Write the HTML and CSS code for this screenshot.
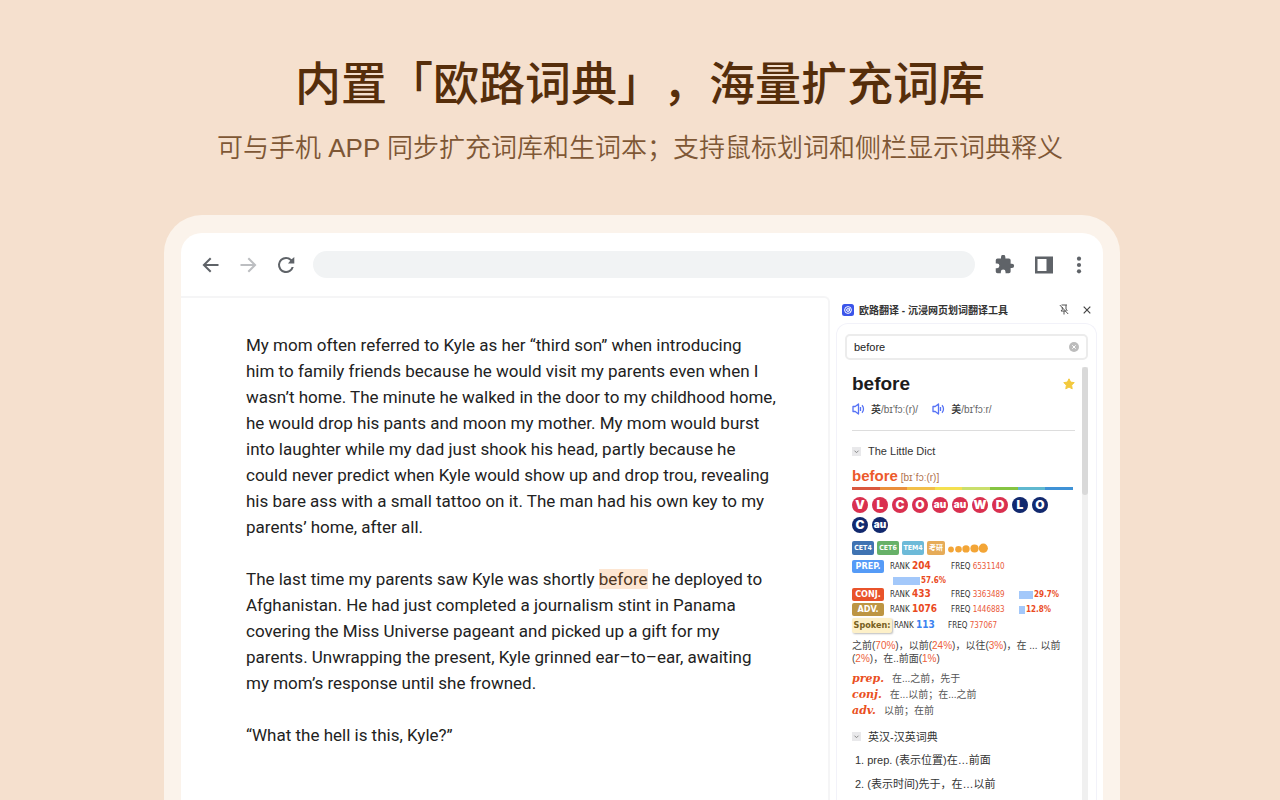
FILE: index.html
```html
<!DOCTYPE html>
<html lang="zh-CN">
<head>
  <meta charset="UTF-8">
  <title>欧路翻译</title>
  <link rel="stylesheet" href="styles.css">
</head>
<body>

  <header class="hero">
    <h1>内置「欧路词典」，海量扩充词库</h1>
    <p>可与手机 APP 同步扩充词库和生词本；支持鼠标划词和侧栏显示词典释义</p>
  </header>

  <div class="stage">
    <div class="browser">

      <div class="toolbar">
        <div class="nav-buttons">
          <button class="icon-btn" aria-label="Back">
            <svg width="24" height="24" viewBox="0 0 24 24"><path d="M20.500 12H6M12.700 5.200L5.900 12l6.800 6.800" fill="none" stroke="#5f6368" stroke-width="2"/></svg>
          </button>
          <button class="icon-btn" aria-label="Forward">
            <svg width="24" height="24" viewBox="0 0 24 24"><path d="M4.500 12H19M12.300 5.200l6.800 6.800-6.800 6.800" fill="none" stroke="#bcbec1" stroke-width="2"/></svg>
          </button>
          <button class="icon-btn" aria-label="Reload">
            <svg width="24" height="24" viewBox="0 0 24 24"><path fill="#5f6368" d="M17.65 6.35A7.96 7.96 0 0 0 12 4a8 8 0 1 0 7.730 10h-2.080A6 6 0 1 1 12 6c1.660 0 3.140.690 4.220 1.780L14 10.500h6.300V4z"/></svg>
          </button>
        </div>
        <input class="address" type="text" aria-label="Address">
        <div class="tool-buttons">
          <button class="icon-btn" aria-label="Extensions">
            <svg width="21" height="21" viewBox="0 0 24 24"><path fill="#5f6368" d="M20.500 11H19V7a2 2 0 0 0-2-2h-4V3.500a2.500 2.500 0 0 0-5 0V5H4a2 2 0 0 0-2 2v3.800h1.500a2.700 2.700 0 0 1 0 5.400H2V20a2 2 0 0 0 2 2h3.800v-1.500a2.700 2.700 0 0 1 5.400 0V22H17a2 2 0 0 0 2-2v-4h1.500a2.500 2.500 0 0 0 0-5z"/></svg>
          </button>
          <button class="icon-btn" aria-label="Side panel">
            <svg width="18" height="18" viewBox="0 0 18 18"><path fill="#5f6368" fill-rule="evenodd" d="M0 0.500h18v17H0zM2.500 3v12h9V3z"/></svg>
          </button>
          <button class="icon-btn menu-btn" aria-label="Menu">
            <svg width="6" height="18" viewBox="0 0 6 18"><g fill="#5f6368"><circle cx="3" cy="2.700" r="2.100"/><circle cx="3" cy="9" r="2.100"/><circle cx="3" cy="15.300" r="2.100"/></g></svg>
          </button>
        </div>
      </div>

      <div class="content">
        <main class="article">
          <p>My mom often referred to Kyle as her “third son” when introducing<br>
          him to family friends because he would visit my parents even when I<br>
          wasn’t home. The minute he walked in the door to my childhood home,<br>
          he would drop his pants and moon my mother. My mom would burst<br>
          into laughter while my dad just shook his head, partly because he<br>
          could never predict when Kyle would show up and drop trou, revealing<br>
          his bare ass with a small tattoo on it. The man had his own key to my<br>
          parents’ home, after all.</p>
          <p>The last time my parents saw Kyle was shortly <mark>before</mark> he deployed to<br>
          Afghanistan. He had just completed a journalism stint in Panama<br>
          covering the Miss Universe pageant and picked up a gift for my<br>
          parents. Unwrapping the present, Kyle grinned ear–to–ear, awaiting<br>
          my mom’s response until she frowned.</p>
          <p>“What the hell is this, Kyle?”</p>
        </main>

        <aside class="panel">
          <div class="panel-head">
            <svg class="logo" width="12" height="12" viewBox="0 0 12 12"><rect width="12" height="12" rx="2.500" fill="#3b55ea"/><circle cx="6" cy="6" r="3.400" fill="none" stroke="#fff" stroke-width="1"/><circle cx="6" cy="6" r="1.400" fill="none" stroke="#fff" stroke-width="1"/><path d="M7.500 4v3l1.500 1" fill="none" stroke="#fff" stroke-width=".7"/></svg>
            <span class="panel-title">欧路翻译 - 沉浸网页划词翻译工具</span>
            <button class="icon-btn" aria-label="Unpin">
              <svg width="10" height="11" viewBox="0 0 10 11"><path d="M2.500 1h5.500M3.300 3v2.500L2 7h5M7 1v4l1.300 2M5 7v3.500M.8 1l8.400 9" fill="none" stroke="#555" stroke-width="1"/></svg>
            </button>
            <button class="icon-btn" aria-label="Close">
              <svg width="8" height="8" viewBox="0 0 8 8"><path d="M.7.700l6.600 6.600M7.300.700L.7 7.300" stroke="#444" stroke-width="1.200"/></svg>
            </button>
          </div>

          <div class="card">
            <div class="search">
              <input type="text" value="before" aria-label="Search">
              <button class="icon-btn" aria-label="Clear">
                <svg width="10" height="10" viewBox="0 0 10 10"><circle cx="5" cy="5" r="5" fill="#bcbcbc"/><path d="M3.300 3.300l3.400 3.400M6.700 3.300L3.300 6.700" stroke="#fff" stroke-width="1"/></svg>
              </button>
            </div>

            <div class="scroller">
              <div class="result">
                <div class="word">
                  <h2>before</h2>
                  <button class="icon-btn" aria-label="Favourite">
                    <svg width="12" height="12" viewBox="0 0 12 12"><path fill="#f3c93d" stroke="#f3c93d" stroke-linejoin="round" d="M6 .8l1.600 3.300 3.600.5-2.600 2.600.6 3.600L6 9.100l-3.200 1.700.6-3.600L.8 4.600l3.600-.5z"/></svg>
                  </button>
                </div>
                <div class="pron">
                  <button class="icon-btn" aria-label="Play UK"><svg width="13" height="12" viewBox="0 0 13 12"><path d="M1 3.500h2.200L6.500 1v10L3.200 8.500H1zM8.500 4v4M10 2.300c2 2 2 5.400 0 7.400" fill="none" stroke="#5672f5" stroke-width="1.300" stroke-linejoin="round"/></svg></button>
                  <span><b>英</b>/bɪ'fɔː(r)/</span>
                  <button class="icon-btn" aria-label="Play US"><svg width="13" height="12" viewBox="0 0 13 12"><path d="M1 3.500h2.200L6.500 1v10L3.200 8.500H1zM8.500 4v4M10 2.300c2 2 2 5.400 0 7.400" fill="none" stroke="#5672f5" stroke-width="1.300" stroke-linejoin="round"/></svg></button>
                  <span><b>美</b>/bɪ'fɔːr/</span>
                </div>

                <h3 class="dict-name"><i class="fold"><svg width="9" height="9" viewBox="0 0 9 9"><path d="M2.500 3.700l2 2 2-2" fill="none" stroke="#888"/></svg></i>The Little Dict</h3>
                <div class="entry"><b>before</b> <span>[bɪˈfɔː(r)]</span></div>
                <div class="rainbow"></div>

                <div class="badges">
                  <span>V</span><span>L</span><span>C</span><span>O</span><span class="small">au</span><span class="small">au</span><span>W</span><span>D</span><span class="navy">L</span><span class="navy">O</span><span class="navy">C</span><span class="navy small">au</span>
                </div>

                <div class="exams">
                  <span class="cet4">CET4</span><span class="cet6">CET6</span><span class="tem4">TEM4</span><span class="ky">考研</span>
                  <svg width="40" height="10" viewBox="0 0 40 10"><g fill="#f3a536"><circle cx="3" cy="6.500" r="2.900"/><circle cx="10.500" cy="6.200" r="3.300"/><circle cx="18" cy="5.900" r="3.700"/><circle cx="26.500" cy="5.500" r="4.100"/><circle cx="35.300" cy="5.200" r="4.600"/></g></svg>
                </div>

                <div class="stats">
                  <div class="stat">
                    <span class="pos blue">PREP.</span><span>RANK <b>204</b></span><span>FREQ <em>6531140</em></span>
                  </div>
                  <div class="share wrapped"><i class="bar" style="width:27px"></i>57.6%</div>
                  <div class="stat">
                    <span class="pos red">CONJ.</span><span>RANK <b>433</b></span><span>FREQ <em>3363489</em></span>
                    <span class="share"><i class="bar" style="width:14px"></i>29.7%</span>
                  </div>
                  <div class="stat">
                    <span class="pos gold">ADV.</span><span>RANK <b>1076</b></span><span>FREQ <em>1446883</em></span>
                    <span class="share"><i class="bar" style="width:6px"></i>12.8%</span>
                  </div>
                  <div class="stat spoken">
                    <span class="pos cream">Spoken:</span><span>RANK <b>113</b></span><span>FREQ <em>737067</em></span>
                  </div>
                </div>

                <p class="senses">之前(<em>70%</em>)，以前(<em>24%</em>)，以往(<em>3%</em>)，在 ... 以前<br>(<em>2%</em>)，在..前面(<em>1%</em>)</p>

                <ul class="meanings">
                  <li><i>prep.</i>在...之前，先于</li>
                  <li><i>conj.</i>在...以前；在...之前</li>
                  <li><i>adv.</i>以前；在前</li>
                </ul>

                <h3 class="dict-name second"><i class="fold"><svg width="9" height="9" viewBox="0 0 9 9"><path d="M2.500 3.700l2 2 2-2" fill="none" stroke="#888"/></svg></i>英汉-汉英词典</h3>
                <div class="defs">
                  <p>1. prep. (表示位置)在…前面</p>
                  <p>2. (表示时间)先于，在…以前</p>
                </div>
              </div>
              <div class="track"><div class="thumb"></div></div>
            </div>
          </div>
        </aside>
      </div>

    </div>
  </div>

</body>
</html>
```
FILE: styles.css
```css
* {
  box-sizing: border-box;
}
body {
  margin: 0;
  height: 100vh;
  overflow: hidden;
  display: flex;
  flex-direction: column;
  background: #f5e0ce;
  font-family: "Liberation Sans", "Noto Sans CJK SC", sans-serif;
}
h1, h2, h3, p, ul {
  margin: 0;
  padding: 0;
}
.icon-btn {
  display: flex;
  align-items: center;
  justify-content: center;
  padding: 0;
  border: 0;
  background: none;
}

/* headline */
.hero {
  padding-top: 48px;
  text-align: center;
  white-space: nowrap;
}
.hero h1 {
  font: 500 46px/64px "Noto Sans CJK SC", sans-serif;
  text-spacing-trim: space-all;
  color: #562e0b;
}
.hero p {
  margin-top: 16px;
  font-size: 26px;
  font-weight: 350;
  line-height: 40px;
  color: #7e5735;
}

/* browser window */
.stage {
  flex: 1;
  min-height: 0;
  display: flex;
  margin-top: 47px;
  padding: 0 160px 0 164px;
}
.browser {
  flex: 1;
  min-width: 0;
  display: flex;
  flex-direction: column;
  border: solid #fbf3eb;
  border-width: 18px 17px 0;
  border-radius: 38px 38px 0 0;
  background: #fff;
  overflow: hidden;
}
.toolbar {
  display: flex;
  align-items: center;
  height: 63px;
  padding: 0 21px 0 17px;
  flex-shrink: 0;
}
.nav-buttons {
  display: flex;
  gap: 14px;
}
.address {
  flex: 1;
  min-width: 0;
  height: 27px;
  margin: 0 19px 0 15px;
  padding: 0 14px;
  border: 0;
  border-radius: 14px;
  background: #f1f3f4;
}
.tool-buttons {
  display: flex;
  align-items: center;
  gap: 20px;
}
.menu-btn {
  margin-left: 3px;
}
.content {
  flex: 1;
  min-height: 0;
  display: flex;
}
.article {
  flex: 1;
  min-width: 0;
  padding: 34px 0 0 65px;
  border-top: 2px solid #f5f5f6;
  border-right: 2px solid #f5f5f6;
  border-top-right-radius: 6px;
  font-family: Roboto, sans-serif;
  font-size: 17px;
  line-height: 26px;
  color: #222;
  white-space: nowrap;
}
.article p {
  margin-bottom: 26px;
}
.article mark {
  background: #fde6d2;
  color: #4c3521;
}

/* side panel */
.panel {
  display: flex;
  flex-direction: column;
  width: 273px;
  padding: 0 6px;
  white-space: nowrap;
}
.panel-head {
  display: flex;
  align-items: center;
  height: 27px;
  padding: 0 6px;
}
.panel-title {
  flex: 1;
  margin-left: 5px;
  font-size: 10px;
  font-weight: bold;
  color: #333;
}
.panel-head .icon-btn + .icon-btn {
  margin-left: 14px;
}
.card {
  flex: 1;
  min-height: 0;
  display: flex;
  flex-direction: column;
  padding: 10px 8px 0;
  border: 1px solid #f2f2f9;
  border-bottom: 0;
  border-radius: 12px 12px 0 0;
}
.search {
  display: flex;
  align-items: center;
  height: 26px;
  padding: 0 7px;
  border: 2px solid #ececec;
  border-radius: 5px;
  flex-shrink: 0;
}
.search input {
  flex: 1;
  min-width: 0;
  padding: 0;
  border: 0;
  outline: 0;
  font: 11px "Liberation Sans", sans-serif;
  color: #222;
}
.scroller {
  flex: 1;
  min-height: 0;
  display: flex;
  gap: 7px;
  margin-top: 7px;
  padding-left: 7px;
  overflow: hidden;
}
.track {
  width: 6px;
  background: #f0f0f0;
}
.thumb {
  height: 128px;
  border-radius: 3px;
  background: #d9d9d9;
}
.result {
  flex: 1;
  min-width: 0;
  color: #333;
}
.word {
  display: flex;
  align-items: center;
  justify-content: space-between;
  height: 33px;
}
.word h2 {
  font-size: 19px;
  color: #1c1c1c;
}
.pron {
  display: flex;
  align-items: center;
  height: 31px;
  padding-bottom: 13px;
  border-bottom: 1px solid #ddd;
  font-size: 10px;
  color: #666;
}
.pron span {
  margin: 0 14px 0 6px;
}
.pron b {
  font-weight: 500;
  color: #333;
}
.dict-name {
  display: flex;
  align-items: center;
  height: 20px;
  margin-top: 10px;
  font-size: 11px;
  font-weight: normal;
  color: #333;
}
.fold {
  display: flex;
  width: 9px;
  height: 9px;
  margin-right: 7px;
  background: #e9e9eb;
}
.entry {
  height: 26px;
  line-height: 30px;
  font-size: 10px;
  color: #b0714d;
}
.entry b {
  font-size: 15px;
  font-weight: bold;
  color: #ec5a2c;
}
.rainbow {
  height: 3px;
  margin-right: 2px;
  background: linear-gradient(90deg, #d9583f 12.5%, #ea8f3c 12.5% 25%, #f2bf4a 25% 37.5%, #f4e04f 37.5% 50%, #cadf6c 50% 62.5%, #85c441 62.5% 75%, #5fb8cf 75% 87.5%, #3f92d6 87.5%);
}
.badges {
  display: flex;
  flex-wrap: wrap;
  justify-content: flex-start;
  gap: 4px;
  margin-top: 7px;
  padding-right: 18px;
}
.badges span {
  width: 16px;
  height: 16px;
  border-radius: 50%;
  background: #d9304f;
  color: #fff;
  font: 900 12px/16px Inter, "Liberation Sans", sans-serif;
  text-align: center;
}
.badges .small {
  font-size: 10px;
  line-height: 14px;
}
.badges .navy {
  background: #12296e;
}
.exams {
  display: flex;
  align-items: center;
  gap: 3px;
  margin-top: 8px;
}
.exams span {
  width: 22px;
  height: 14px;
  border-radius: 2px;
  color: #fff;
  font: bold 7px/14px "DejaVu Sans Condensed", "Noto Sans CJK SC", sans-serif;
  text-align: center;
}
.exams .cet4 { background: #3f73b2; }
.exams .cet6 { background: #67b168; }
.exams .tem4 { background: #6dbad8; }
.exams .ky { width: 18px; background: #e6ab58; }

/* frequency rows */
.stats {
  margin-top: 4px;
  font: 8px/14px "DejaVu Sans Condensed", "DejaVu Sans", sans-serif;
}
.stat {
  display: grid;
  grid-template-columns: 38px 61px 68px auto;
  align-items: center;
  height: 15px;
}
.stats b {
  font-size: 10px;
  color: #ea4a22;
}
.stats em {
  font-style: normal;
  color: #ea5a3a;
}
.pos {
  width: 32px;
  height: 13px;
  border-radius: 2px;
  color: #fff;
  font-size: 9px;
  font-weight: bold;
  line-height: 13px;
  text-align: center;
}
.blue { background: #559bf7; }
.red { background: #e9532b; }
.gold { background: #bd9543; }
.cream {
  width: 40px;
  height: 15px;
  background: #fdf0c8;
  color: #776021;
  line-height: 15px;
  box-shadow: 1px 1px 2px #bbb;
}
.share {
  display: flex;
  align-items: center;
  gap: 1px;
  height: 13px;
  font-weight: bold;
  color: #ea4a22;
}
.wrapped {
  padding-left: 41px;
}
.bar {
  height: 8px;
  background: #a3c8fa;
}
.stat.spoken {
  grid-template-columns: 42px 54px auto;
  height: 17px;
}
.spoken b {
  color: #3b82f0;
}
.senses {
  margin-top: 5px;
  font: 10px/13px "Liberation Sans", "Noto Sans CJK SC", sans-serif;
  color: #444;
}
.senses em {
  font-style: normal;
  color: #ee6039;
}
.meanings {
  margin-top: 6px;
  list-style: none;
  font-size: 10px;
  line-height: 16px;
  color: #555;
}
.meanings li {
  height: 16px;
}
.meanings i {
  margin-right: 8px;
  font: italic bold 11px/16px "DejaVu Serif", serif;
  color: #ea4f22;
}
.second {
  margin-top: 7px;
}
.defs {
  padding: 2px 0 0 3px;
  font-size: 11px;
  line-height: 24px;
}
```
